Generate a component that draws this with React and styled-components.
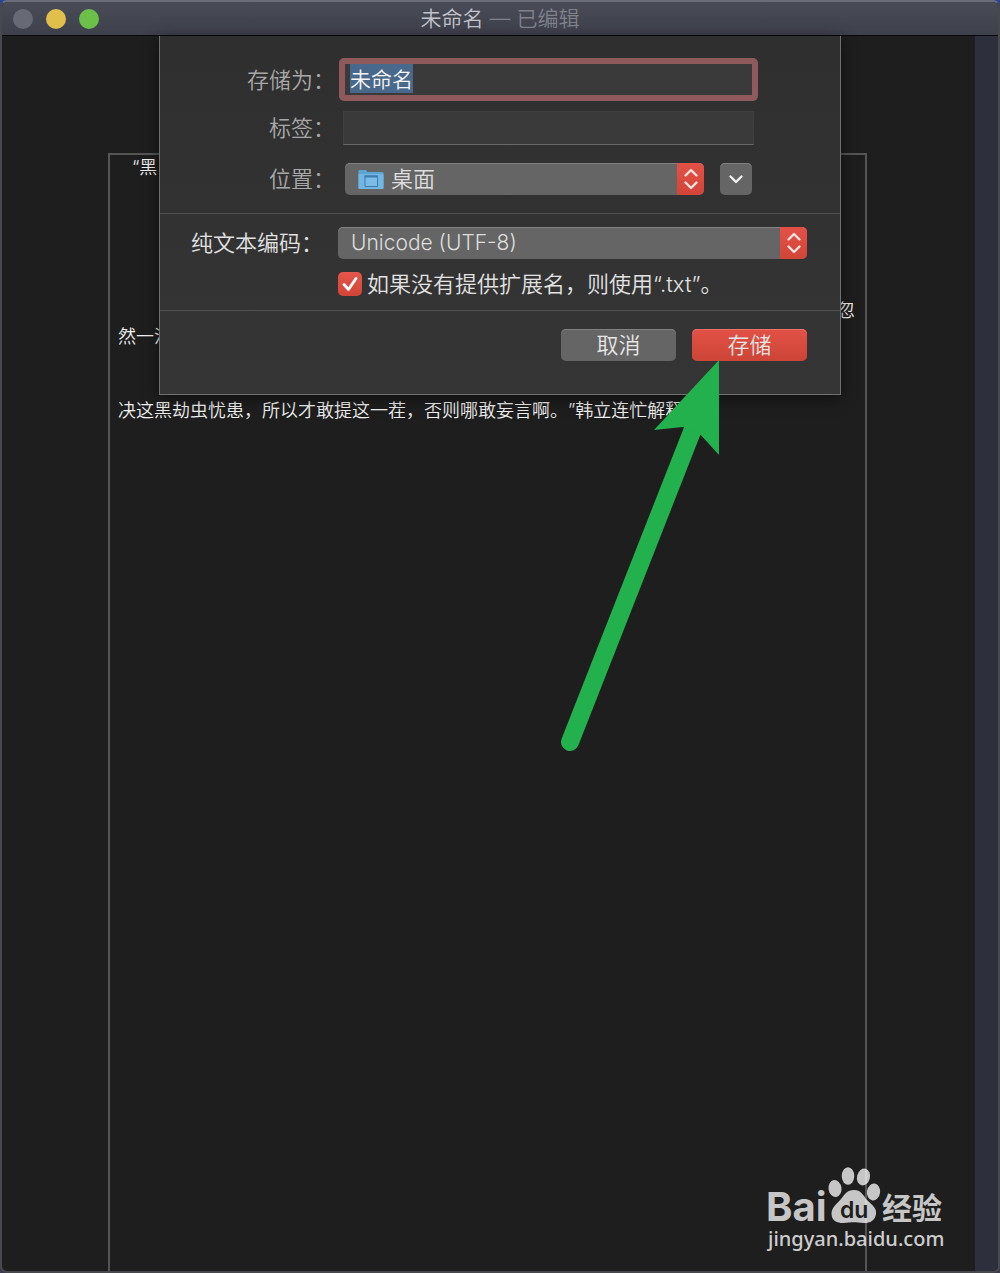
import React, { useEffect, useRef } from "react";
import styled, { createGlobalStyle } from "styled-components";

const GlobalStyle = createGlobalStyle`
  * {
    box-sizing: border-box;
  }

  body {
    margin: 0;
    background: linear-gradient(#2a459c, #3c3a4c);
    font-family: Inter, "Noto Sans CJK SC", sans-serif;
    font-weight: 350;
    text-spacing-trim: space-all;
  }

  input,
  select,
  button {
    font: inherit;
    color: inherit;
  }
`;

const Window = styled.div`
  position: relative;
  display: flex;
  flex-direction: column;
  min-height: 100vh;
  border: 2px solid #48494d;
  border-top-color: #6b6d78;
  border-radius: 7px;
  background: #1e1e1e;
  overflow: hidden;
`;

const TitleBar = styled.header`
  display: grid;
  grid-template-columns: 1fr auto 1fr;
  align-items: center;
  height: 34px;
  padding: 0 11px;
  background: linear-gradient(#494b57, #3e404c);
  border-bottom: 1px solid #08080a;
`;

const Lights = styled.div`
  display: flex;
  gap: 13px;
`;

const Light = styled.button`
  width: 20px;
  height: 20px;
  padding: 0;
  border: none;
  border-radius: 50%;
  background: ${(props) => props.$color};
`;

const Title = styled.h1`
  margin: 0;
  font-size: 21px;
  line-height: 30px;
  font-weight: 350;
  color: #c3c4cb;

  span {
    color: #80828d;
  }
`;

const Content = styled.div`
  position: relative;
  flex: 1;
  display: flex;
`;

const Editor = styled.main`
  flex: 1;
  display: flex;
  padding: 117px 108px 0 106px;
`;

const Paper = styled.article`
  flex: 1;
  border: 2px solid #555;
  border-bottom: none;
  padding: 0 10px 0 8px;
  font-size: 18px;
  line-height: 26px;
  color: #f0f0f0;
`;

const Paragraph = styled.p`
  margin: 0 0 ${(props) => props.$after || 0}px;
  text-indent: ${(props) => (props.$indent ? 14 : 0)}px;
`;

const LineEnd = styled.span`
  display: block;
  text-align: right;
`;

const ScrollTrack = styled.div`
  width: 23px;
  background: #2d2f3c;
`;

const SheetLayer = styled.div`
  position: absolute;
  top: 0;
  left: 0;
  right: 0;
  display: flex;
  justify-content: center;
`;

const Sheet = styled.form`
  position: relative;
  width: 682px;
  max-width: 100%;
  border: 1px solid #707070;
  border-top: none;
  background: linear-gradient(#2f2f2f, #353535);
  box-shadow: 0 3px 14px rgba(0, 0, 0, 0.5);
  font-size: 22px;
  line-height: 30px;
  color: #dedede;
`;

const Section = styled.div`
  display: grid;
  grid-template-columns: ${(props) => props.$labels}px 1fr;
  align-items: center;
  border-bottom: 1px solid #505050;
`;

const FileSection = styled(Section)`
  grid-template-rows: 43px 34px 48px;
  gap: 10px 4px;
  padding: 22px 82px 10px 0;
`;

const EncodingSection = styled(Section)`
  gap: 10px 15px;
  padding: 13px 33px 11px 0;
`;

const Label = styled.label`
  text-align: right;
  color: ${(props) => (props.$dim ? "#a8a8a8" : "#e2e2e2")};
`;

const NameInput = styled.input`
  width: 100%;
  height: 43px;
  padding: 0 5px 3px;
  border: 6px solid #8f5a5b;
  border-radius: 5px;
  outline: none;
  background: #3a3a3a;
  color: #f4f4f4;
  font-family: "Noto Sans CJK SC", sans-serif;
  font-size: 21px;

  &::selection {
    background: #48688c;
    color: #f4f4f4;
  }
`;

const TagInput = styled.input`
  height: 34px;
  margin: 0 4px;
  border: 1px solid #404040;
  border-bottom-color: #686868;
  background: #3a3a3a;
`;

const Location = styled.div`
  display: flex;
  gap: 16px;
  margin: 0 6px;
`;

const SelectBox = styled.div`
  position: relative;
  flex: 1;
  display: flex;
  height: 32px;
  border-radius: 5px;
  overflow: hidden;
  background: #656565;
  box-shadow: inset 0 1px #808080;

  select {
    flex: 1;
    appearance: none;
    border: none;
    outline: none;
    background: none;
    padding: 0 40px 0 ${(props) => (props.$icon ? 46 : 13)}px;
    font-size: ${(props) => (props.$icon ? 22 : 21)}px;
    line-height: 30px;
  }
`;

const Stepper = styled.span`
  position: absolute;
  top: 0;
  right: 0;
  bottom: 0;
  display: flex;
  align-items: center;
  justify-content: center;
  width: 27px;
  background: linear-gradient(#e35146, #d14537);
  pointer-events: none;
`;

const FolderSlot = styled.span`
  position: absolute;
  top: 6px;
  left: 13px;
  display: flex;
  pointer-events: none;
`;

const ExpandButton = styled.button`
  display: flex;
  align-items: center;
  justify-content: center;
  width: 32px;
  height: 32px;
  padding: 0;
  border: none;
  border-radius: 5px;
  background: #656565;
  box-shadow: inset 0 1px #808080;
`;

const CheckRow = styled.div`
  grid-column: 2;
  display: flex;
  align-items: center;
  gap: 5px;
`;

const CheckBox = styled.span`
  position: relative;
  display: flex;

  input {
    appearance: none;
    width: 24px;
    height: 24px;
    margin: 0;
    border-radius: 5px;
    background: #5f5f5f;
  }

  input:checked {
    background: linear-gradient(#e5564b, #d14537);
  }

  svg {
    position: absolute;
    inset: 0;
    pointer-events: none;
  }
`;

const Actions = styled.div`
  display: flex;
  justify-content: flex-end;
  gap: 16px;
  padding: 18px 33px 33px;
`;

const ActionButton = styled.button`
  width: 115px;
  height: 32px;
  padding: 0;
  border: none;
  border-radius: 5px;
  line-height: 30px;
  color: #e6e6e6;
  background: ${(props) =>
    props.$primary ? "linear-gradient(#e35146, #cc4537)" : "#656565"};
  box-shadow: inset 0 1px ${(props) => (props.$primary ? "#ea7268" : "#808080")};
`;

const Arrow = styled.svg`
  position: absolute;
  top: 323px;
  right: 119px;
  pointer-events: none;
`;

const Watermark = styled.div`
  position: absolute;
  right: 53px;
  bottom: 18px;
  color: rgba(255, 255, 255, 0.75);

  svg {
    display: block;
    overflow: visible;
  }
`;

const SiteLink = styled.a`
  display: block;
  padding-left: 3px;
  font-family: "Noto Sans", sans-serif;
  font-size: 20px;
  line-height: 28px;
  font-weight: 500;
  color: rgba(255, 255, 255, 0.8);
  text-decoration: none;
`;

const UpDown = () => (
  <svg width="16" height="24" viewBox="0 0 16 24" fill="none" stroke="#fbe3df" strokeWidth="2.4" strokeLinecap="round" strokeLinejoin="round">
    <path d="M2.500 8.500 8 3l5.500 5.500M2.500 15.500 8 21l5.500-5.500" />
  </svg>
);

const Folder = () => (
  <svg width="26" height="21" viewBox="0 0 26 21">
    <path d="M0.500 2Q0.500 1 1.500 1H8l1.500 2H24.500Q25.500 3 25.500 4V19Q25.500 20 24.500 20H1.500Q0.500 20 0.500 19Z" fill="#5aa5d4" />
    <path d="M0.500 5H25.500V19Q25.500 20 24.500 20H1.500Q0.500 20 0.500 19Z" fill="#72b6e3" />
    <path d="M7 7H19.500V17.500H7Z" fill="#7abce6" stroke="#3c7eab" />
    <path d="M6.500 7.500H20" stroke="#3c7eab" strokeWidth="2" />
  </svg>
);

const BaiduLogo = () => (
  <svg width="180" height="60" viewBox="0 0 180 60" fill="currentColor">
    <text x="1" y="56" fontFamily="Inter, sans-serif" fontSize="40" fontWeight="700">Bai</text>
    <ellipse cx="70" cy="23.5" rx="6.500" ry="8.500" transform="rotate(-8 70 23.5)" />
    <ellipse cx="83" cy="11" rx="6.300" ry="8.800" />
    <ellipse cx="98.500" cy="12" rx="6.500" ry="8.500" transform="rotate(14 98.500 12)" />
    <ellipse cx="108.500" cy="27" rx="6.600" ry="8.500" transform="rotate(8 108.500 27)" />
    <path d="M89 25C96 25 98 30 102 35C107 40 112 43 111 49C110 56 104 58.500 98 58C93 57.500 90 57 84 57.500C77 58.500 67 59 66.500 49C66.500 42 72 39 76 34C80 29 82 25 89 25Z" />
    <text x="75" y="53" fontFamily="Inter, sans-serif" fontSize="23" fontWeight="600" fill="#1e1e1e">du</text>
    <text x="117" y="54" fontFamily="Noto Sans CJK SC, sans-serif" fontSize="30" fontWeight="700">经验</text>
  </svg>
);

const App = () => {
  const nameRef = useRef(null);

  useEffect(() => {
    nameRef.current.focus();
    nameRef.current.select();
  }, []);

  return (
    <>
      <GlobalStyle />
      <Window>
        <TitleBar>
          <Lights>
            <Light $color="#676a75" aria-label="关闭" />
            <Light $color="#e2bf4b" aria-label="最小化" />
            <Light $color="#6cc04a" aria-label="缩放" />
          </Lights>
          <Title>
            未命名 <span>— 已编辑</span>
          </Title>
        </TitleBar>
        <Content>
          <Editor>
            <Paper>
              <Paragraph $indent $after={117}>“黑</Paragraph>
              <Paragraph $after={48}>
                <LineEnd>忽</LineEnd>
                然一沉
              </Paragraph>
              <Paragraph>
                决这黑劫虫忧患，所以才敢提这一茬，否则哪敢妄言啊。”韩立连忙解释
              </Paragraph>
            </Paper>
          </Editor>
          <ScrollTrack />
          <SheetLayer>
            <Sheet onSubmit={(e) => e.preventDefault()}>
              <FileSection $labels={175}>
                <Label $dim htmlFor="name">存储为：</Label>
                <NameInput id="name" ref={nameRef} defaultValue="未命名" />
                <Label $dim htmlFor="tags">标签：</Label>
                <TagInput id="tags" />
                <Label $dim htmlFor="place">位置：</Label>
                <Location>
                  <SelectBox $icon>
                    <FolderSlot>
                      <Folder />
                    </FolderSlot>
                    <select id="place">
                      <option>桌面</option>
                    </select>
                    <Stepper>
                      <UpDown />
                    </Stepper>
                  </SelectBox>
                  <ExpandButton type="button" aria-label="展开">
                    <svg width="16" height="12" viewBox="0 0 16 12" fill="none" stroke="#f2f2f2" strokeWidth="2.4" strokeLinecap="round" strokeLinejoin="round">
                      <path d="M2.500 3.500 8 9l5.500-5.500" />
                    </svg>
                  </ExpandButton>
                </Location>
              </FileSection>
              <EncodingSection $labels={163}>
                <Label htmlFor="encoding">纯文本编码：</Label>
                <SelectBox>
                  <select id="encoding">
                    <option>Unicode (UTF-8)</option>
                  </select>
                  <Stepper>
                    <UpDown />
                  </Stepper>
                </SelectBox>
                <CheckRow>
                  <CheckBox>
                    <input id="extension" type="checkbox" defaultChecked />
                    <svg width="24" height="24" viewBox="0 0 24 24" fill="none" stroke="#fff" strokeWidth="2.800" strokeLinecap="round" strokeLinejoin="round">
                      <path d="M6 12.500 10.500 17.500 18 6.500" />
                    </svg>
                  </CheckBox>
                  <Label htmlFor="extension">如果没有提供扩展名，则使用“.txt”。</Label>
                </CheckRow>
              </EncodingSection>
              <Actions>
                <ActionButton type="button">取消</ActionButton>
                <ActionButton $primary>存储</ActionButton>
              </Actions>
              <Arrow width="162" height="396" viewBox="0 0 162 396" fill="#22b14c">
                <path d="M11 383 134 70" stroke="#22b14c" strokeWidth="18" strokeLinecap="round" />
                <path d="M160 1V96L140 74 124 68 95 71Z" />
              </Arrow>
            </Sheet>
          </SheetLayer>
        </Content>
        <Watermark>
          <BaiduLogo />
          <SiteLink href="#">jingyan.baidu.com</SiteLink>
        </Watermark>
      </Window>
    </>
  );
};

export default App;
